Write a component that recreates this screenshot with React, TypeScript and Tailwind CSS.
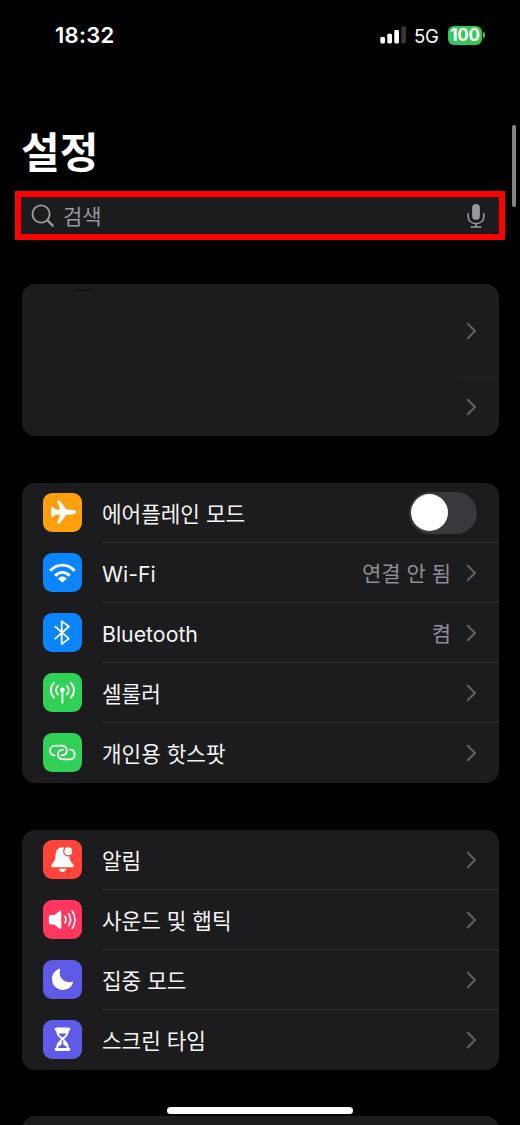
import type { ReactNode } from "react";

interface Item {
  label: string;
  color: string;
  icon: ReactNode;
  value?: string;
  toggle?: boolean;
}

const network: Item[] = [
  { label: "에어플레인 모드", color: "bg-[#ff9f0c]", icon: <AirplaneIcon />, toggle: true },
  { label: "Wi-Fi", color: "bg-[#0b84ff]", icon: <WifiIcon />, value: "연결 안 됨" },
  { label: "Bluetooth", color: "bg-[#0b84ff]", icon: <BluetoothIcon />, value: "켬" },
  { label: "셀룰러", color: "bg-[#31d158]", icon: <CellularIcon /> },
  { label: "개인용 핫스팟", color: "bg-[#31d158]", icon: <HotspotIcon /> },
];

const alerts: Item[] = [
  { label: "알림", color: "bg-[#ff453a]", icon: <BellIcon /> },
  { label: "사운드 및 햅틱", color: "bg-[#ff375f]", icon: <SoundIcon /> },
  { label: "집중 모드", color: "bg-[#5e5ce6]", icon: <MoonIcon /> },
  { label: "스크린 타임", color: "bg-[#5e5ce6]", icon: <HourglassIcon /> },
];

export default function App() {
  return (
    <div className="relative flex h-[1125px] w-[520px] flex-col overflow-hidden bg-black font-[Inter,'Noto_Sans_CJK_KR',sans-serif] text-white">
      <StatusBar />

      {/* Title */}
      <h1 className="mt-[54px] ml-[21px] h-[67px] shrink-0 text-[42px] leading-[58px] font-bold">설정</h1>

      {/* Search */}
      <div className="mx-[15px] h-[49px] shrink-0 border-[6px] border-[#fe0000]">
        <div className="flex h-full items-center rounded-[6px] bg-[#1c1c1e] pr-[14px] pl-[10px] text-[#98989f]">
          <SearchIcon />
          <span className="ml-[8px] flex-1 pt-[2px] text-[21px] leading-[30px]">검색</span>
          <MicIcon />
        </div>
      </div>

      {/* Account */}
      <div className="mt-[44px] mr-[21px] ml-[22px] h-[152px] shrink-0 rounded-[13px] bg-[#1c1c1e]">
        <div className="flex h-[93px] items-center justify-end pr-[22px]">
          <div className="mr-auto mb-[80px] ml-[53px] h-px w-[16px] rounded-full bg-[#0c0c0d]" />
          <Chevron />
        </div>
        <div className="ml-auto h-px w-[42px] bg-[#29292b]" />
        <div className="flex h-[58px] items-center justify-end pr-[22px]">
          <Chevron />
        </div>
      </div>

      <Group items={network} className="mt-[47px]" />
      <Group items={alerts} className="mt-[47px]" />

      <div className="mt-[46px] mr-[21px] ml-[22px] h-[60px] shrink-0 rounded-[13px] bg-[#1c1c1e]" />

      {/* Scroll indicator */}
      <div className="absolute top-[125px] right-[4px] h-[82px] w-[4px] rounded-full bg-[#858585]" />
      {/* Home indicator */}
      <div className="absolute bottom-[11px] left-[167px] h-[7px] w-[186px] rounded-full bg-white" />
    </div>
  );
}

function StatusBar() {
  return (
    <div className="flex h-[70px] shrink-0 items-center pr-[35px] pl-[55px]">
      <span className="text-[22px] leading-[28px] font-semibold tracking-[0.3px]">18:32</span>
      <svg className="ml-auto" width="26" height="18" viewBox="0 0 26 18">
        <rect x="0.3" y="11" width="4.7" height="6.5" rx="1.4" fill="#fff" />
        <rect x="7.3" y="7.8" width="4.7" height="9.7" rx="1.4" fill="#fff" />
        <rect x="14.3" y="4" width="4.7" height="13.5" rx="1.4" fill="#fff" />
        <rect x="21.3" y="0.6" width="4.7" height="16.9" rx="1.4" fill="#363636" />
      </svg>
      <span className="ml-[8px] w-[26px] pt-px text-[18.5px] leading-[24px] tracking-[-0.3px]">5G</span>
      <div className="ml-[8px] flex h-[19px] w-[34px] items-center justify-center rounded-[6px] bg-[#35c759] text-[17px] leading-[19px] font-bold tracking-[-0.3px]">
        100
      </div>
      <div className="ml-px h-[6px] w-[2px] rounded-r-full bg-[#35c759]" />
    </div>
  );
}

function Group({ items, className }: { items: Item[]; className: string }) {
  return (
    <div className={`mr-[21px] ml-[22px] shrink-0 overflow-hidden rounded-[13px] bg-[#1c1c1e] ${className}`}>
      {items.map((item, i) => (
        <Row key={item.label} item={item} last={i === items.length - 1} />
      ))}
    </div>
  );
}

function Row({ item, last }: { item: Item; last: boolean }) {
  return (
    <div className="flex h-[60px] pl-[21px]">
      <div className={`mt-[10px] size-[39px] shrink-0 rounded-[9px] ${item.color}`}>{item.icon}</div>
      <div
        className={`ml-[20px] flex flex-1 items-center border-b pr-[22px] ${
          last ? "border-transparent" : "border-[#2c2c2e]"
        }`}
      >
        <span className="flex-1 pt-[3px] text-[21.3px] leading-[30px] text-[#f4f4f5]">{item.label}</span>
        {item.value && (
          <span className="mr-[15px] pt-[2px] text-[21px] leading-[30px] text-[#8e8e94]">{item.value}</span>
        )}
        {item.toggle ? (
          <div className="flex h-[42px] w-[68px] items-center rounded-full bg-[#39393d] pl-[2px]">
            <div className="size-[37px] rounded-full bg-white" />
          </div>
        ) : (
          <Chevron />
        )}
      </div>
    </div>
  );
}

function Chevron() {
  return (
    <svg className="shrink-0" width="11" height="18" viewBox="0 0 11 18" fill="none">
      <path d="M1.8 1.8 9 9l-7.2 7.2" stroke="#5d5d62" strokeWidth="2.2" strokeLinecap="round" strokeLinejoin="round" />
    </svg>
  );
}

function SearchIcon() {
  return (
    <svg width="24" height="24" viewBox="0 0 24 24" fill="none" stroke="currentColor" strokeLinecap="round">
      <circle cx="10.1" cy="10" r="8.6" strokeWidth="1.9" />
      <path d="m16.5 16.4 5.2 5.2" strokeWidth="2.4" />
    </svg>
  );
}

function MicIcon() {
  return (
    <svg width="18" height="26" viewBox="0 0 18 26" fill="none" stroke="currentColor" strokeLinecap="round">
      <rect x="5.1" y="1" width="7.8" height="15.8" rx="3.9" fill="currentColor" stroke="none" />
      <path d="M1.2 10.8v2.6c0 4.6 3.2 7.2 7.8 7.2s7.8-2.6 7.8-7.2v-2.6M9 20.6v3.4M4.2 24h9.6" strokeWidth="1.6" />
    </svg>
  );
}

function Glyph({ children }: { children: ReactNode }) {
  return (
    <svg width="39" height="39" viewBox="0 0 39 39" fill="none" strokeLinecap="round" strokeLinejoin="round">
      {children}
    </svg>
  );
}

function AirplaneIcon() {
  return (
    <Glyph>
      <path
        fill="#fff"
        d="M33.2 19.1c0 1.6-2.3 2.4-4.6 2.4h-4.2c-.5 0-.8.2-1.1.6l-6.1 7.7c-.4.4-.7.6-1.2.6h-1c-.6 0-.8-.4-.6-1l2.9-7.6-4.6-.4-2 2.3c-.3.3-.6.4-1 .4h-.6c-.5 0-.8-.3-.8-.8v-8.4c0-.5.3-.8.8-.8h.6c.4 0 .7.1 1 .4l2 2.3 4.6-.4-2.9-7.6c-.2-.6 0-1 .6-1h1c.5 0 .8.2 1.2.6l6.1 7.7c.3.4.6.6 1.1.6h4.2c2.3 0 4.6.8 4.6 2.4Z"
      />
    </Glyph>
  );
}

function WifiIcon() {
  return (
    <Glyph>
      <g stroke="#fff" strokeWidth="2.9" strokeLinecap="butt">
        <path d="M7.2 17.8c7-7.6 17.4-7.6 24.4 0" />
        <path d="M12.2 22.7c4.2-4.4 10.2-4.4 14.4 0" />
      </g>
      <path fill="#fff" d="M15.3 25.2c2.4-2.4 5.8-2.4 8.2 0 .3.3.3.5 0 .8l-3.4 3.1c-.5.4-.9.4-1.4 0L15.3 26c-.3-.3-.3-.5 0-.8Z" />
    </Glyph>
  );
}

function BluetoothIcon() {
  return (
    <Glyph>
      <path d="m12.3 13.6 13.6 12-7.2 5.5V8.1l7.2 5.4-13.6 12.2" stroke="#fff" strokeWidth="1.8" />
    </Glyph>
  );
}

function CellularIcon() {
  return (
    <Glyph>
      <circle cx="19.4" cy="16.9" r="2.3" fill="#fff" />
      <g stroke="#fff" strokeWidth="1.9">
        <path d="M19.4 17v12.6" />
        <path d="M15 12.8c-2.4 2.5-2.4 6.1 0 8.6M23.8 12.8c2.4 2.5 2.4 6.1 0 8.6" />
        <path d="M11 9.8c-4.2 4.4-4.2 10.4 0 14.8M27.8 9.8c4.2 4.4 4.2 10.4 0 14.8" />
      </g>
    </Glyph>
  );
}

function HotspotIcon() {
  return (
    <Glyph>
      <g stroke="#fff" strokeWidth="1.9">
        <path d="M11.4 22.4c-2.6-.3-4.3-2.4-4.3-4.9 0-2.9 2.2-4.9 5.2-4.9h6.3c3 0 5.3 2 5.3 4.9 0 2.8-2.1 4.9-5.3 4.9" />
        <path d="M27.4 16.6c2.6.3 4.3 2.4 4.3 4.9 0 2.9-2.2 4.9-5.2 4.9h-6.3c-3 0-5.3-2-5.3-4.9 0-2.8 2.1-4.9 5.3-4.9" />
      </g>
    </Glyph>
  );
}

function BellIcon() {
  return (
    <Glyph>
      <path
        fill="#fff"
        d="M19.5 7.3c-4.1 0-6.6 2.9-6.9 7.2-.3 4.6-.8 6.4-2.7 8.4-1 1.1-1.6 1.9-1.6 2.8 0 1 .8 1.6 2 1.6h18.4c1.2 0 2-.6 2-1.6 0-.9-.6-1.7-1.6-2.8-1.9-2-2.4-3.8-2.7-8.4-.3-4.3-2.8-7.2-6.9-7.2Z"
      />
      <path fill="#fff" d="M15.7 28.8h7.6c-.3 1.9-1.8 3.1-3.8 3.1s-3.5-1.2-3.8-3.1Z" />
      <circle cx="25.3" cy="11.2" r="4.6" fill="#fff" stroke="#ff453a" strokeWidth="1.3" />
    </Glyph>
  );
}

function SoundIcon() {
  return (
    <Glyph>
      <path
        fill="#fff"
        d="M5.8 17.1c0-1.3.7-2 2-2h3c.4 0 .7-.1 1-.4l4.5-3.7c1.1-.9 2-.5 2 .8v16c0 1.3-.9 1.6-2 .8l-4.5-3.7c-.3-.3-.6-.4-1-.4h-3c-1.3 0-2-.7-2-2v-5.4Z"
      />
      <g stroke="#fff" strokeWidth="1.7">
        <path d="M22 16.5c1.2 2 1.2 4.4 0 6.4" />
        <path d="M25.6 13.8c2.3 3.5 2.3 8.3 0 11.8" />
        <path d="M29.2 11c3.5 5.3 3.5 12.1 0 17.4" />
      </g>
    </Glyph>
  );
}

function MoonIcon() {
  return (
    <Glyph>
      <path
        fill="#fff"
        d="M16.4 8.8c.6-.2 1 .2.8.8-2.5 7.6 4 14.4 12 12.1.7-.2 1.1.3.9.9A11 11 0 0 1 20 30 10.8 10.8 0 0 1 9 19c0-4.8 3-8.6 7.4-10.2Z"
      />
    </Glyph>
  );
}

function HourglassIcon() {
  return (
    <Glyph>
      <path
        fill="#fff"
        fillRule="evenodd"
        d="M13.8 7.4h11.4c1.3 0 2.1.8 2.1 1.8 0 .9-.7 1.6-1.6 1.7-.1 3.6-1.5 5.4-3.8 7.3-.8.7-.8 1.4 0 2.1 2.3 1.9 3.7 3.7 3.8 7.3.9.1 1.6.8 1.6 1.7 0 1-.8 1.8-2.1 1.8H13.8c-1.3 0-2.1-.8-2.1-1.8 0-.9.7-1.6 1.6-1.7.1-3.6 1.5-5.4 3.8-7.3.8-.7.8-1.4 0-2.1-2.3-1.9-3.7-3.7-3.8-7.3-.9-.1-1.6-.8-1.6-1.7 0-1 .8-1.8 2.1-1.8Zm1.9 6.2c.6 1.2 1.5 2.2 2.7 3.2.7.6 1.5.6 2.2 0 1.2-1 2.1-2 2.7-3.2h-7.6Zm3.1 6.6v3.4c0 .5-.2.8-.6 1.1l-2.5 1.8c-.4.3-.6.8-.6 1.4h8.8c0-.6-.2-1.1-.6-1.4l-2.5-1.8c-.4-.3-.6-.6-.6-1.1v-3.4h-1.4Z"
      />
    </Glyph>
  );
}
